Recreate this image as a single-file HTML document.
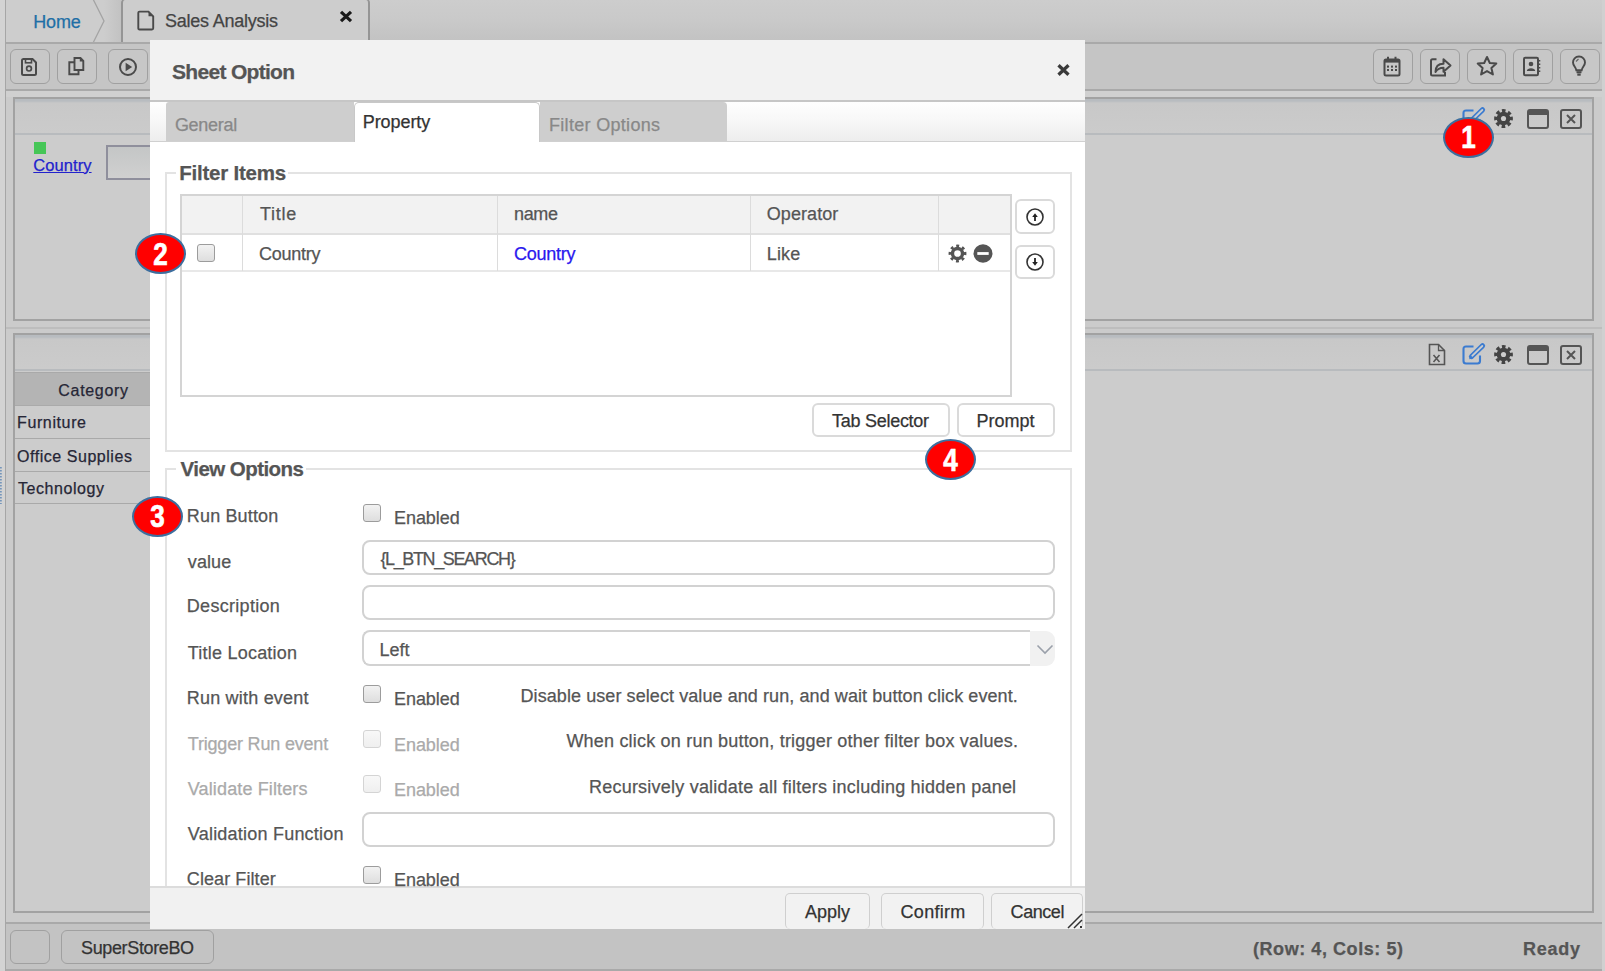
<!DOCTYPE html>
<html><head><meta charset="utf-8">
<style>
html,body{margin:0;padding:0;}
body{width:1605px;height:971px;position:relative;overflow:hidden;background:#cbcbcb;font-family:"Liberation Sans",sans-serif;}
.a{position:absolute;box-sizing:border-box;}
.t{position:absolute;line-height:1;white-space:nowrap;font-family:"Liberation Sans",sans-serif;-webkit-text-stroke:0.25px currentColor;}
.tb{position:absolute;box-sizing:border-box;border:1.6px solid #a0a0a0;border-radius:6px;background:#c7c7c7;}
.ck{position:absolute;box-sizing:border-box;width:18px;height:18px;border:1.5px solid #9c9c9c;border-radius:3px;background:linear-gradient(#f2f2f2,#dedede);}
.ck.dis{border-color:#d4d4d4;background:linear-gradient(#f8f8f8,#efefef);}
.inp{position:absolute;box-sizing:border-box;border:2px solid #d2d2d2;border-radius:8px;background:#fff;}
.btn{position:absolute;box-sizing:border-box;border:2px solid #dadada;border-radius:6px;background:#fff;}
.fbtn{position:absolute;box-sizing:border-box;border:1px solid #cfcfcf;border-radius:5px;background:#f2f2f2;}
.badge{position:absolute;box-sizing:border-box;width:51px;height:41px;border-radius:50%;background:#ff0000;border:2.5px solid #3d6e9e;}
.badge span{position:absolute;left:0;right:0;top:50%;text-align:center;color:#fff;font-weight:bold;font-size:31px;line-height:1;transform:translateY(-50%) scaleX(0.84);-webkit-text-stroke:0.7px #fff;}
svg{position:absolute;overflow:visible;}
</style></head><body>

<!-- left strip -->
<div class="a" style="left:0;top:0;width:5px;height:971px;background:#d3d3d3;"></div>
<div class="a" style="left:5px;top:0;width:1px;height:971px;background:#a6a6a6;"></div>
<div class="a" style="left:1602px;top:0;width:3px;height:971px;background:#d0d0d0;"></div>

<!-- top tab bar -->
<div class="a" style="left:6px;top:0;width:1596px;height:42px;background:linear-gradient(#cdcdcd,#c9c9c9 50%,#c2c2c2);"></div>
<div class="a" style="left:6px;top:0;width:98px;height:42px;background:#cdcdcd;"></div>
<div class="a" style="left:104px;top:0;width:17px;height:42px;background:linear-gradient(90deg,#cdcdcd,#c2c2c2);"></div>
<svg style="left:0;top:0" width="120" height="43"><polyline points="93,-1 104,21 93,43" fill="none" stroke="#a4a4a4" stroke-width="1.3"/></svg>
<div class="a" style="left:121px;top:-1px;width:249px;height:45px;border:1px solid #959595;border-width:1px 2px 0 2px;border-radius:4px 4px 0 0;background:#cdcdcd;"></div>
<div class="a" style="left:6px;top:42px;width:1596px;height:2px;background:#a9a9a9;"></div>
<!-- doc icon -->
<svg style="left:137px;top:10px" width="18" height="21" viewBox="0 0 18 21"><path d="M2.5 1.6 H11.5 L16.2 6.3 V18.3 Q16.2 19.5 15 19.5 H2.5 Q1.3 19.5 1.3 18.3 V2.8 Q1.3 1.6 2.5 1.6 Z" fill="none" stroke="#4a4a4a" stroke-width="1.9"/><path d="M11.5 1.6 V6.3 H16.2 Z" fill="#4a4a4a"/></svg>
<!-- tab close x -->
<svg style="left:338.5px;top:9.5px" width="14" height="13" viewBox="0 0 14 13"><path d="M2 1.8 L12 11.2 M12 1.8 L2 11.2" stroke="#1a1a1a" stroke-width="3.2"/></svg>

<!-- toolbar -->
<div class="a" style="left:6px;top:44px;width:1596px;height:45px;background:#c5c5c5;"></div>
<div class="a" style="left:6px;top:91px;width:1596px;height:6px;background:#d0d0d0;"></div>
<div class="a" style="left:6px;top:89px;width:1596px;height:2px;background:#a9a9a9;"></div>
<div class="tb" style="left:10px;top:49px;width:40px;height:34.5px;"></div>
<div class="tb" style="left:57px;top:49px;width:40px;height:34.5px;"></div>
<div class="tb" style="left:108px;top:49px;width:40px;height:34.5px;"></div>
<!-- save -->
<svg style="left:20px;top:57px" width="18" height="20" viewBox="0 0 18 20"><path d="M3 2 H12.5 L16 5.5 V16.5 Q16 18 14.5 18 H3.5 Q2 18 2 16.5 V3.5 Q2 2 3.5 2 Z" fill="none" stroke="#4a4a4a" stroke-width="2"/><rect x="5.5" y="2" width="6" height="3.8" fill="none" stroke="#4a4a4a" stroke-width="1.6"/><circle cx="9" cy="11.6" r="2.4" fill="none" stroke="#4a4a4a" stroke-width="1.7"/></svg>
<!-- copy -->
<svg style="left:67px;top:56px" width="18" height="21" viewBox="0 0 18 21"><path d="M7.5 2 H13.5 L16.3 4.8 V14 H7.5 Z" fill="none" stroke="#4a4a4a" stroke-width="1.9"/><path d="M13.5 2 V4.8 H16.3" fill="none" stroke="#4a4a4a" stroke-width="1.4"/><path d="M7.5 6.3 H2.3 V18.3 H11.5 V14" fill="none" stroke="#4a4a4a" stroke-width="1.9"/></svg>
<!-- play -->
<svg style="left:118px;top:57px" width="20" height="20" viewBox="0 0 20 20"><circle cx="10" cy="10" r="8" fill="none" stroke="#4a4a4a" stroke-width="2"/><path d="M7.6 5.8 L14.2 10 L7.6 14.2 Z" fill="#4a4a4a"/></svg>

<div class="tb" style="left:1373px;top:49px;width:40px;height:34.5px;"></div>
<div class="tb" style="left:1420px;top:49px;width:40px;height:34.5px;"></div>
<div class="tb" style="left:1467px;top:49px;width:39px;height:34.5px;"></div>
<div class="tb" style="left:1513px;top:49px;width:40px;height:34.5px;"></div>
<div class="tb" style="left:1560px;top:49px;width:40px;height:34.5px;"></div>
<!-- calendar -->
<svg style="left:1383px;top:56px" width="18" height="21" viewBox="0 0 18 21"><rect x="1.5" y="3.6" width="15" height="15.8" rx="1.5" fill="none" stroke="#4a4a4a" stroke-width="2"/><rect x="1.5" y="3.6" width="15" height="3" fill="#4a4a4a"/><path d="M5 0.8 V4.5 M12.5 0.8 V4.5" stroke="#4a4a4a" stroke-width="2"/><g fill="#4a4a4a"><rect x="4" y="9.6" width="2" height="2"/><rect x="8" y="9.6" width="2" height="2"/><rect x="12" y="9.6" width="2" height="2"/><rect x="4" y="13" width="2" height="2"/><rect x="8" y="13" width="2" height="2"/><rect x="12" y="13" width="2" height="2"/></g></svg>
<!-- share -->
<svg style="left:1429px;top:56px" width="23" height="21" viewBox="0 0 23 21"><path d="M7.5 3.3 H3.5 Q2 3.3 2 4.8 V18 Q2 19.5 3.5 19.5 H16 V16" fill="none" stroke="#4a4a4a" stroke-width="2"/><path d="M6.5 16 C6.5 10 9.5 7.8 14.5 7.8 V3.2 L21.5 9.5 L14.5 15.8 V11.8 C11 11.8 8.5 12.8 6.5 16 Z" fill="none" stroke="#4a4a4a" stroke-width="2" stroke-linejoin="round"/></svg>
<!-- star -->
<svg style="left:1476px;top:55px" width="22" height="22" viewBox="0 0 22 22"><path d="M11 2 L13.8 8 L20.3 8.6 L15.4 13 L16.9 19.5 L11 16.1 L5.1 19.5 L6.6 13 L1.7 8.6 L8.2 8 Z" fill="none" stroke="#4a4a4a" stroke-width="2" stroke-linejoin="round"/></svg>
<!-- contacts -->
<svg style="left:1522px;top:56px" width="20" height="21" viewBox="0 0 20 21"><rect x="2" y="1.8" width="14" height="17.5" rx="1.2" fill="none" stroke="#4a4a4a" stroke-width="2"/><circle cx="9" cy="8" r="2.3" fill="#4a4a4a"/><path d="M4.8 15 C4.8 11.2 13.2 11.2 13.2 15 Z" fill="#4a4a4a"/><path d="M16 4.8 H18.3 M16 8.3 H18.3 M16 11.8 H18.3 M16 15.3 H18.3" stroke="#4a4a4a" stroke-width="1.6"/></svg>
<!-- bulb -->
<svg style="left:1571px;top:55px" width="16" height="22" viewBox="0 0 16 22"><path d="M8 1.5 C4.3 1.5 2 4.3 2 7.4 C2 10.5 4.8 12 5.3 15.2 H10.7 C11.2 12 14 10.5 14 7.4 C14 4.3 11.7 1.5 8 1.5 Z" fill="none" stroke="#4a4a4a" stroke-width="1.9"/><path d="M5.5 17.2 H10.5" stroke="#4a4a4a" stroke-width="2"/><path d="M6.3 19.6 H9.7" stroke="#4a4a4a" stroke-width="2.2"/><path d="M5 6.5 L7.5 4" stroke="#666" stroke-width="1.2"/></svg>

<!-- panel 1 -->
<div class="a" style="left:13px;top:97px;width:1581px;height:224px;border:2px solid #a2a2a2;background:#cccccc;"></div>
<div class="a" style="left:15px;top:99px;width:1577px;height:36px;background:linear-gradient(#b8bcc0 0,#b8bcc0 2px,#c8c8c8 4px,#cbcbcb 100%);border-bottom:2px solid #b8bbbe;"></div>
<div class="a" style="left:34px;top:142px;width:12px;height:12px;background:#46c657;"></div>
<div class="a" style="left:106px;top:145px;width:60px;height:35px;border:2px solid #8f8f9c;background:linear-gradient(#c4c6c6,#d0d0d0);"></div>
<!-- panel1 icons -->
<svg style="left:1461px;top:107px" width="26" height="22" viewBox="0 0 26 22"><path d="M12.5 3.5 H5 Q2.5 3.5 2.5 6 V18 Q2.5 20.5 5 20.5 H16.5 Q19 20.5 19 18 V12.5" fill="none" stroke="#3b7bd0" stroke-width="2.1"/><path d="M10.5 13.5 L21.5 2.8" stroke="#3b7bd0" stroke-width="5.2" stroke-linecap="round"/><path d="M11.2 12.8 L21.3 3" stroke="#cdcdcd" stroke-width="1.8" stroke-linecap="round"/><path d="M8.2 16.3 L9.3 12.2 L12.3 15.2 Z" fill="#3b7bd0"/></svg>
<svg style="left:1494px;top:109px" width="19" height="19" viewBox="0 0 20 20"><circle cx="10" cy="10" r="7.2" fill="#444"/><circle cx="10" cy="10" r="8.2" fill="none" stroke="#444" stroke-width="3.4" stroke-dasharray="3.7 2.74" transform="rotate(-12.9 10 10)"/><circle cx="10" cy="10" r="2.7" fill="#cdcdcd"/></svg>
<svg style="left:1527px;top:109px" width="22" height="20" viewBox="0 0 22 20"><rect x="1" y="1" width="20" height="18" rx="2" fill="none" stroke="#555" stroke-width="2"/><rect x="1" y="1" width="20" height="5" fill="#555"/></svg>
<svg style="left:1560px;top:109px" width="22" height="20" viewBox="0 0 22 20"><rect x="1" y="1" width="20" height="18" rx="2" fill="none" stroke="#555" stroke-width="2"/><path d="M7 6 L15 14 M15 6 L7 14" stroke="#555" stroke-width="2"/></svg>

<!-- gap between panels -->
<div class="a" style="left:6px;top:327px;width:1596px;height:2px;background:#bdbdbd;"></div>

<!-- panel 2 -->
<div class="a" style="left:13px;top:333px;width:1581px;height:580px;border:2px solid #a2a2a2;background:#cccccc;"></div>
<div class="a" style="left:15px;top:335px;width:1577px;height:36px;background:linear-gradient(#b8bcc0 0,#b8bcc0 2px,#c8c8c8 4px,#cbcbcb 100%);border-bottom:2px solid #b8bbbe;"></div>
<div class="a" style="left:15px;top:372px;width:140px;height:34px;background:#b4b4b4;border-top:1.5px solid #a9a9a9;border-bottom:1px solid #aaaaaa;"></div>
<div class="a" style="left:15px;top:438px;width:140px;height:1px;background:#a9a9a9;"></div>
<div class="a" style="left:15px;top:471px;width:140px;height:1px;background:#a9a9a9;"></div>
<div class="a" style="left:15px;top:503px;width:140px;height:1px;background:#a9a9a9;"></div>
<svg style="left:0px;top:467px" width="3" height="37"><line x1="0.9" y1="0" x2="0.9" y2="37" stroke="#6a8fb8" stroke-width="1.6" stroke-dasharray="1.5,1.5"/></svg>
<!-- panel2 icons -->
<svg style="left:1428px;top:343px" width="18" height="23" viewBox="0 0 18 23"><path d="M1.5 1.5 H10.5 L16.5 7.5 V21.5 H1.5 Z" fill="none" stroke="#555" stroke-width="1.6"/><path d="M10.5 1.5 V7.5 H16.5" fill="none" stroke="#555" stroke-width="1.3"/><path d="M5.5 12 L11.5 19 M11.5 12 L5.5 19" stroke="#555" stroke-width="1.6"/></svg>
<svg style="left:1461px;top:343px" width="26" height="22" viewBox="0 0 26 22"><path d="M12.5 3.5 H5 Q2.5 3.5 2.5 6 V18 Q2.5 20.5 5 20.5 H16.5 Q19 20.5 19 18 V12.5" fill="none" stroke="#3b7bd0" stroke-width="2.1"/><path d="M10.5 13.5 L21.5 2.8" stroke="#3b7bd0" stroke-width="5.2" stroke-linecap="round"/><path d="M11.2 12.8 L21.3 3" stroke="#cdcdcd" stroke-width="1.8" stroke-linecap="round"/><path d="M8.2 16.3 L9.3 12.2 L12.3 15.2 Z" fill="#3b7bd0"/></svg>
<svg style="left:1494px;top:345px" width="19" height="19" viewBox="0 0 20 20"><circle cx="10" cy="10" r="7.2" fill="#444"/><circle cx="10" cy="10" r="8.2" fill="none" stroke="#444" stroke-width="3.4" stroke-dasharray="3.7 2.74" transform="rotate(-12.9 10 10)"/><circle cx="10" cy="10" r="2.7" fill="#cdcdcd"/></svg>
<svg style="left:1527px;top:345px" width="22" height="20" viewBox="0 0 22 20"><rect x="1" y="1" width="20" height="18" rx="2" fill="none" stroke="#555" stroke-width="2"/><rect x="1" y="1" width="20" height="5" fill="#555"/></svg>
<svg style="left:1560px;top:345px" width="22" height="20" viewBox="0 0 22 20"><rect x="1" y="1" width="20" height="18" rx="2" fill="none" stroke="#555" stroke-width="2"/><path d="M7 6 L15 14 M15 6 L7 14" stroke="#555" stroke-width="2"/></svg>

<!-- status bar -->
<div class="a" style="left:6px;top:922px;width:1596px;height:2px;background:#a9a9a9;"></div>
<div class="a" style="left:6px;top:924px;width:1596px;height:45px;background:#c3c3c3;"></div>
<div class="a" style="left:6px;top:969px;width:1596px;height:2px;background:#a9a9a9;"></div>
<div class="tb" style="left:10px;top:930px;width:40px;height:34px;background:#c3c3c3;"></div>
<div class="tb" style="left:61px;top:930px;width:153px;height:34px;background:#c3c3c3;"></div>

<!-- ================= DIALOG ================= -->

<div class="a" style="left:150px;top:40px;width:935px;height:889px;background:#fff;"></div>
<div class="a" style="left:150px;top:40px;width:935px;height:60px;background:#f2f2f2;"></div>
<div class="a" style="left:150px;top:100px;width:935px;height:2px;background:#c6c6c6;"></div>
<svg style="left:1056px;top:63px" width="15" height="14" viewBox="0 0 15 14"><path d="M2.5 2.3 L12.5 11.7 M12.5 2.3 L2.5 11.7" stroke="#3a3a3a" stroke-width="3.3"/></svg>
<!-- tab strip -->
<div class="a" style="left:150px;top:102px;width:935px;height:40px;background:linear-gradient(#fefefe,#f7f7f7 50%,#ededed);"></div>
<div class="a" style="left:150px;top:141px;width:935px;height:1px;background:#d0d0d0;"></div>
<div class="a" style="left:166px;top:102px;width:188px;height:39px;background:#cecece;border-radius:3px 0 0 0;"></div>
<div class="a" style="left:354px;top:102px;width:186px;height:40px;background:#fff;border:1px solid #c8c8c8;border-bottom:none;border-radius:5px 5px 0 0;"></div>
<div class="a" style="left:540px;top:102px;width:187px;height:39px;background:#cecece;border-radius:0 4px 0 0;"></div>

<!-- fieldset 1 -->
<div class="a" style="left:165px;top:172px;width:907px;height:280px;border:2px solid #e3e3e3;"></div>
<div class="a" style="left:176px;top:165px;width:112px;height:16px;background:#fff;"></div>
<!-- table -->
<div class="a" style="left:180px;top:194px;width:832px;height:203px;border:2px solid #d4d4d4;background:#fff;"></div>
<div class="a" style="left:182px;top:196px;width:828px;height:39px;background:#f2f2f2;border-bottom:2px solid #e0e0e0;"></div>
<div class="a" style="left:182px;top:270px;width:828px;height:2px;background:#e8e8e8;"></div>
<div class="a" style="left:242px;top:196px;width:1px;height:75px;background:#dcdcdc;"></div>
<div class="a" style="left:497px;top:196px;width:1px;height:75px;background:#dcdcdc;"></div>
<div class="a" style="left:750px;top:196px;width:1px;height:75px;background:#dcdcdc;"></div>
<div class="a" style="left:938px;top:196px;width:1px;height:75px;background:#dcdcdc;"></div>
<div class="ck" style="left:197px;top:244px;"></div>
<svg style="left:948px;top:244px" width="19" height="19" viewBox="0 0 20 20"><circle cx="10" cy="10" r="5.3" fill="none" stroke="#555" stroke-width="3.6"/><circle cx="10" cy="10" r="7.9" fill="none" stroke="#555" stroke-width="3" stroke-dasharray="3.0 3.2" transform="rotate(-11 10 10)"/></svg>
<svg style="left:973px;top:244px" width="20" height="19" viewBox="0 0 20 19"><ellipse cx="10" cy="9.5" rx="9.5" ry="9.3" fill="#555"/><rect x="4.3" y="8.1" width="11.4" height="2.8" fill="#fff"/></svg>
<div class="btn" style="left:1015px;top:199px;width:40px;height:35px;"></div>
<div class="btn" style="left:1015px;top:245px;width:40px;height:34px;"></div>
<svg style="left:1025px;top:207px" width="20" height="20" viewBox="0 0 20 20"><circle cx="10" cy="10" r="8" fill="none" stroke="#333" stroke-width="1.6"/><path d="M10 14 V9" stroke="#222" stroke-width="1.8"/><path d="M7.2 10 L10 6.3 L12.8 10 Z" fill="#222"/></svg>
<svg style="left:1025px;top:252px" width="20" height="20" viewBox="0 0 20 20"><circle cx="10" cy="10" r="8" fill="none" stroke="#333" stroke-width="1.6"/><path d="M10 6 V11" stroke="#222" stroke-width="1.8"/><path d="M7.2 10 L10 13.7 L12.8 10 Z" fill="#222"/></svg>
<div class="btn" style="left:812px;top:403px;width:138px;height:34px;"></div>
<div class="btn" style="left:957px;top:403px;width:98px;height:34px;"></div>

<!-- fieldset 2 -->
<div class="a" style="left:165px;top:468px;width:907px;height:440px;border:2px solid #e3e3e3;"></div>
<div class="a" style="left:176px;top:460px;width:130px;height:16px;background:#fff;"></div>
<div class="ck" style="left:363px;top:504px;"></div>
<div class="inp" style="left:362px;top:540px;width:693px;height:35px;"></div>
<div class="inp" style="left:362px;top:585px;width:693px;height:35px;"></div>
<div class="a" style="left:362px;top:630px;width:693px;height:36px;border:2px solid #d2d2d2;border-right:none;border-radius:8px 0 0 8px;background:#fff;"></div>
<div class="a" style="left:1030px;top:630px;width:26px;height:36px;background:#fff;"></div>
<div class="a" style="left:1030px;top:630.5px;width:25px;height:35px;background:#f1f1f1;border-radius:0 9px 9px 0;"></div>
<svg style="left:1036px;top:644px" width="18" height="11" viewBox="0 0 18 11"><path d="M1.5 1.5 L9 9 L16.5 1.5" fill="none" stroke="#9aa0aa" stroke-width="1.6"/></svg>
<div class="ck" style="left:363px;top:685px;"></div>
<div class="ck dis" style="left:363px;top:730px;"></div>
<div class="ck dis" style="left:363px;top:775px;"></div>
<div class="inp" style="left:362px;top:812px;width:693px;height:35px;"></div>
<div class="ck" style="left:363px;top:866px;"></div>

<!-- footer -->
<div class="a" style="left:150px;top:886px;width:935px;height:2px;background:#dcdcdc;"></div>
<div class="a" style="left:150px;top:888px;width:935px;height:41px;background:#f1f1f1;"></div>
<div class="fbtn" style="left:785px;top:893px;width:85px;height:36px;border-bottom:none;"></div>
<div class="fbtn" style="left:881px;top:893px;width:103px;height:36px;border-bottom:none;"></div>
<div class="fbtn" style="left:991px;top:893px;width:92px;height:36px;border-bottom:none;"></div>
<svg style="left:1067px;top:913px" width="16" height="16" viewBox="0 0 16 16"><path d="M1 15 L15 1 M7 15 L15 7" stroke="#333" stroke-width="1.5"/><rect x="13" y="13" width="2" height="2" fill="#333"/></svg>

<span class=t style="left:33.3px;top:12.7px;font-size:18px;font-weight:normal;color:#1f6fa6;letter-spacing:-0.20px;">Home</span>
<span class=t style="left:165.0px;top:12.2px;font-size:18px;font-weight:normal;color:#444;letter-spacing:-0.23px;">Sales Analysis</span>
<span class=t style="left:33.3px;top:156.9px;font-size:16.5px;font-weight:normal;color:#2222cc;letter-spacing:0.07px;text-decoration:underline;">Country</span>
<span class=t style="left:58.3px;top:382.9px;font-size:16px;font-weight:normal;color:#262636;letter-spacing:0.69px;">Category</span>
<span class=t style="left:17.0px;top:415.4px;font-size:16px;font-weight:normal;color:#262636;letter-spacing:0.62px;">Furniture</span>
<span class=t style="left:17.0px;top:448.5px;font-size:16px;font-weight:normal;color:#262636;letter-spacing:0.54px;">Office Supplies</span>
<span class=t style="left:18.0px;top:480.9px;font-size:16px;font-weight:normal;color:#262636;letter-spacing:0.56px;">Technology</span>
<span class=t style="left:81.0px;top:939.2px;font-size:18px;font-weight:normal;color:#333;letter-spacing:-0.36px;">SuperStoreBO</span>
<span class=t style="left:1253.0px;top:940.2px;font-size:18px;font-weight:bold;color:#555;letter-spacing:0.56px;">(Row: 4, Cols: 5)</span>
<span class=t style="left:1523.0px;top:940.2px;font-size:18px;font-weight:bold;color:#555;letter-spacing:0.75px;">Ready</span>
<span class=t style="left:172.0px;top:60.8px;font-size:21px;font-weight:bold;color:#555;letter-spacing:-0.69px;">Sheet Option</span>
<span class=t style="left:174.9px;top:115.9px;font-size:18px;font-weight:normal;color:#888;letter-spacing:-0.27px;">General</span>
<span class=t style="left:362.7px;top:112.8px;font-size:18px;font-weight:normal;color:#333;letter-spacing:-0.06px;">Property</span>
<span class=t style="left:549.0px;top:116.2px;font-size:18px;font-weight:normal;color:#888;letter-spacing:0.31px;">Filter Options</span>
<span class=t style="left:179.2px;top:162.6px;font-size:20.5px;font-weight:bold;color:#555;letter-spacing:-0.22px;">Filter Items</span>
<span class=t style="left:260.0px;top:205.2px;font-size:18px;font-weight:normal;color:#555;letter-spacing:0.75px;">Title</span>
<span class=t style="left:514.0px;top:205.2px;font-size:18px;font-weight:normal;color:#555;letter-spacing:-0.33px;">name</span>
<span class=t style="left:766.7px;top:205.2px;font-size:18px;font-weight:normal;color:#555;letter-spacing:0.09px;">Operator</span>
<span class=t style="left:259.0px;top:244.8px;font-size:18px;font-weight:normal;color:#555;letter-spacing:-0.27px;">Country</span>
<span class=t style="left:514.0px;top:244.8px;font-size:18px;font-weight:normal;color:#2a18ee;letter-spacing:-0.27px;">Country</span>
<span class=t style="left:766.7px;top:244.8px;font-size:18px;font-weight:normal;color:#555;letter-spacing:0.20px;">Like</span>
<span class=t style="left:832.0px;top:411.6px;font-size:18px;font-weight:normal;color:#333;letter-spacing:-0.27px;">Tab Selector</span>
<span class=t style="left:976.5px;top:411.6px;font-size:18px;font-weight:normal;color:#333;letter-spacing:0.00px;">Prompt</span>
<span class=t style="left:180.6px;top:458.7px;font-size:20.5px;font-weight:bold;color:#555;letter-spacing:-0.56px;">View Options</span>
<span class=t style="left:186.8px;top:507.4px;font-size:18px;font-weight:normal;color:#555;letter-spacing:0.16px;">Run Button</span>
<span class=t style="left:187.8px;top:552.8px;font-size:18px;font-weight:normal;color:#555;letter-spacing:0.10px;">value</span>
<span class=t style="left:186.8px;top:597.2px;font-size:18px;font-weight:normal;color:#555;letter-spacing:0.30px;">Description</span>
<span class=t style="left:187.8px;top:644.2px;font-size:18px;font-weight:normal;color:#555;letter-spacing:0.22px;">Title Location</span>
<span class=t style="left:186.8px;top:688.9px;font-size:18px;font-weight:normal;color:#555;letter-spacing:0.20px;">Run with event</span>
<span class=t style="left:187.8px;top:734.8px;font-size:18px;font-weight:normal;color:#aaa;letter-spacing:-0.19px;">Trigger Run event</span>
<span class=t style="left:187.8px;top:779.5px;font-size:18px;font-weight:normal;color:#aaa;letter-spacing:0.13px;">Validate Filters</span>
<span class=t style="left:187.8px;top:824.5px;font-size:18px;font-weight:normal;color:#555;letter-spacing:0.22px;">Validation Function</span>
<span class=t style="left:186.8px;top:870.2px;font-size:18px;font-weight:normal;color:#555;letter-spacing:0.09px;">Clear Filter</span>
<span class=t style="left:394.0px;top:508.7px;font-size:18px;font-weight:normal;color:#555;letter-spacing:-0.07px;">Enabled</span>
<span class=t style="left:394.0px;top:690.2px;font-size:18px;font-weight:normal;color:#555;letter-spacing:-0.07px;">Enabled</span>
<span class=t style="left:394.0px;top:735.7px;font-size:18px;font-weight:normal;color:#aaa;letter-spacing:-0.07px;">Enabled</span>
<span class=t style="left:394.0px;top:780.7px;font-size:18px;font-weight:normal;color:#aaa;letter-spacing:-0.07px;">Enabled</span>
<span class=t style="left:394.0px;top:871.2px;font-size:18px;font-weight:normal;color:#555;letter-spacing:-0.07px;">Enabled</span>
<span class=t style="left:380.4px;top:549.8px;font-size:18px;font-weight:normal;color:#555;letter-spacing:-1.37px;">{L_BTN_SEARCH}</span>
<span class=t style="left:379.4px;top:640.8px;font-size:18px;font-weight:normal;color:#555;letter-spacing:0.07px;">Left</span>
<span class=t style="left:520.5px;top:687.3px;font-size:18px;font-weight:normal;color:#555;letter-spacing:0.08px;">Disable user select value and run, and wait button click event.</span>
<span class=t style="left:566.4px;top:732.2px;font-size:18px;font-weight:normal;color:#555;letter-spacing:0.20px;">When click on run button, trigger other filter box values.</span>
<span class=t style="left:589.0px;top:777.6px;font-size:18px;font-weight:normal;color:#555;letter-spacing:0.22px;">Recursively validate all filters including hidden panel</span>
<span class=t style="left:804.9px;top:903.0px;font-size:18px;font-weight:normal;color:#333;letter-spacing:0.05px;">Apply</span>
<span class=t style="left:900.6px;top:903.0px;font-size:18px;font-weight:normal;color:#333;letter-spacing:0.27px;">Confirm</span>
<span class=t style="left:1010.6px;top:903.0px;font-size:18px;font-weight:normal;color:#333;letter-spacing:-0.44px;">Cancel</span>

<!-- badges -->
<div class="badge" style="left:1443px;top:116.5px;width:51px;height:41.5px;"><span>1</span></div>
<div class="badge" style="left:135px;top:233px;"><span>2</span></div>
<div class="badge" style="left:132px;top:495.5px;"><span>3</span></div>
<div class="badge" style="left:925px;top:439px;"><span>4</span></div>

</body></html>
